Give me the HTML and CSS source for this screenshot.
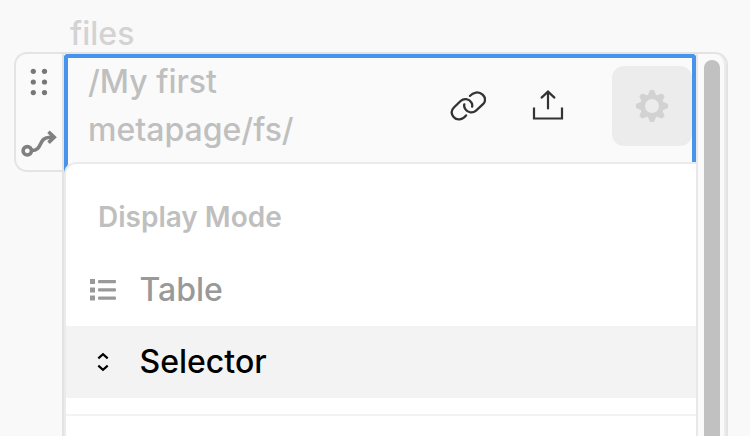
FILE: index.html
```html
<!DOCTYPE html>
<html lang="en">
<head>
<meta charset="utf-8">
<title>files</title>
<link rel="stylesheet" href="styles.css">
</head>
<body>
<div class="title">files</div>
<div class="node">
  <div class="handle">
    <svg class="grip" width="20" height="28" viewBox="0 0 20 28" fill="#777"><circle cx="4.3" cy="3.3" r="2.6"/><circle cx="15.5" cy="3.3" r="2.6"/><circle cx="4.3" cy="14" r="2.6"/><circle cx="15.5" cy="14" r="2.6"/><circle cx="4.3" cy="24.6" r="2.6"/><circle cx="15.5" cy="24.6" r="2.6"/></svg>
    <svg class="route" width="36" height="28" viewBox="0 0 36 28" fill="none" stroke="#808080" stroke-width="3.6"><circle cx="6.3" cy="20.8" r="4.2"/><path d="M10.500 20.500C22.500 20.500 16.500 7.200 29 7.200H33"/><path d="M27.500 1.800l5.700 5.400-5.700 5.400"/></svg>
  </div>
  <div class="panel">
    <div class="frame">
      <div class="header">
        <div class="path">/My first metapage/fs/</div>
        <svg class="link" width="36" height="32" viewBox="0 0 36 32" fill="none" stroke="#333" stroke-width="2.3" stroke-linecap="round"><path d="M16.1 24.4C12.7 29.2 6.8 29.8 3.6 25.9C1 22.7 1.1 19.3 3.9 16.5L10.600 10C13.8 7 19 7.7 21.3 11.4C22.3 13 22.5 14.5 22.1 15.7"/><path d="M20 4.900C23.1 1 28.8.2 32.6 3.7C35.8 6.7 35.8 10.3 33 13.2L26 19.6C22.8 22.5 17.9 21.8 15.5 18.3C14.2 16.5 13.9 14.9 14.3 13.4"/></svg>
        <svg class="share" width="32" height="32" viewBox="0 0 32 32" fill="none" stroke="#333" stroke-width="2.2" stroke-linecap="round"><path d="M2 17.500v11h28v-11" stroke-linecap="butt"/><path d="M16 18.500V1.600M9.600 7.600L16 1.600l6.400 6"/></svg>
        <div class="settings">
          <svg width="32" height="32" viewBox="-16 -16 32 32" fill="none"><circle r="9.300" stroke="#d2d2d2" stroke-width="4.600"/><g fill="#d2d2d2"><path id="tooth" d="M-4.400-10L-2.400-15Q-2.200-16-1.400-16H1.400Q2.200-16 2.400-15L4.400-10Z"/><use href="#tooth" transform="rotate(45)"/><use href="#tooth" transform="rotate(90)"/><use href="#tooth" transform="rotate(135)"/><use href="#tooth" transform="rotate(180)"/><use href="#tooth" transform="rotate(225)"/><use href="#tooth" transform="rotate(270)"/><use href="#tooth" transform="rotate(315)"/></g></svg>
        </div>
      </div>
    </div>
    <div class="scroller"><div class="thumb"></div></div>
    <div class="menu">
      <div class="group">Display Mode</div>
      <div class="item">
        <svg width="28" height="24" viewBox="0 0 28 24" fill="#999"><path d="M1 1h5v5H1zM1 9.500h5v5H1zM1 17.500h5v5H1z"/><rect x="9" y="2" width="18" height="3.200" rx="1"/><rect x="9" y="10.300" width="18" height="3.200" rx="1"/><rect x="9" y="18.500" width="18" height="3.200" rx="1"/></svg>
        <span>Table</span>
      </div>
      <div class="item active">
        <svg width="28" height="24" viewBox="0 0 28 24" fill="none" stroke="#000" stroke-width="2.200"><path d="M9.300 8.400L14 4.200l4.700 4.200M9.300 15.600L14 19.800l4.700-4.200"/></svg>
        <span>Selector</span>
      </div>
      <div class="divider"></div>
    </div>
  </div>
</div>
</body>
</html>
```
FILE: styles.css
```css
* { box-sizing: border-box; }
body {
  margin: 0;
  height: 436px;
  overflow: hidden;
  background: #f9f9f9;
  font-family: Inter, "Liberation Sans", sans-serif;
  font-size: 32px;
  font-weight: 500;
}
svg { display: block; flex: none; }
.title {
  height: 52px;
  padding: 14px 0 0 70px;
  line-height: 40px;
  color: #d3d3d3;
}
.node {
  display: flex;
  align-items: flex-start;
  padding-left: 14px;
}
.handle {
  width: 48px;
  height: 120px;
  border: 2px solid #e4e4e4;
  border-right: 0;
  border-radius: 13px 0 0 13px;
  background: #fafafa;
}
.grip { margin: 14px 0 0 13px; }
.route { margin: 34px 0 0 5px; }
.panel {
  position: relative;
  display: flex;
  width: 666px;
  height: 384px;
  border: 2px solid #e3e3e3;
  border-bottom: 0;
  border-radius: 0 13px 0 0;
  background: #fafafa;
}
.frame {
  width: 632px;
  border: 4px solid #4894ed;
  border-bottom: 0;
  border-radius: 4px 4px 0 0;
}
.header {
  display: flex;
  padding: 0 0 0 20px;
}
.path {
  width: 300px;
  line-height: 48px;
  color: #bfbfbf;
}
.link { margin: 33px 0 0 62px; }
.share { margin: 32px 0 0 46px; }
.settings {
  display: grid;
  place-items: center;
  flex: none;
  width: 80px;
  height: 80px;
  margin: 8px 0 0 48px;
  border-radius: 12px;
  background: #ececec;
}
.scroller {
  width: 30px;
  padding: 6px 0 0 6px;
  border-left: 2px solid #e8e8e8;
  border-right: 2px solid #ebebeb;
  border-radius: 0 11px 0 0;
}
.thumb {
  width: 16px;
  height: 376px;
  border-radius: 8px 8px 0 0;
  background: #c1c1c1;
}
.menu {
  position: absolute;
  left: 0;
  top: 108px;
  width: 634px;
  height: 274px;
  padding-top: 18px;
  border: 2px solid #ebebeb;
  border-right-color: #e8e8e8;
  border-bottom: 0;
  border-radius: 12px 0 0 0;
  background: #fff;
}
.group {
  height: 72px;
  padding-left: 32px;
  line-height: 71px;
  font-size: 28px;
  font-weight: 600;
  color: #bfbfbf;
}
.item {
  display: flex;
  align-items: center;
  gap: 22.5px;
  height: 72px;
  padding-left: 23px;
  color: #999;
}
.item span { line-height: 40px; }
.active { background: #f3f3f3; color: #000; }
.divider { height: 2px; margin-top: 16px; background: #f3f3f3; }
```
